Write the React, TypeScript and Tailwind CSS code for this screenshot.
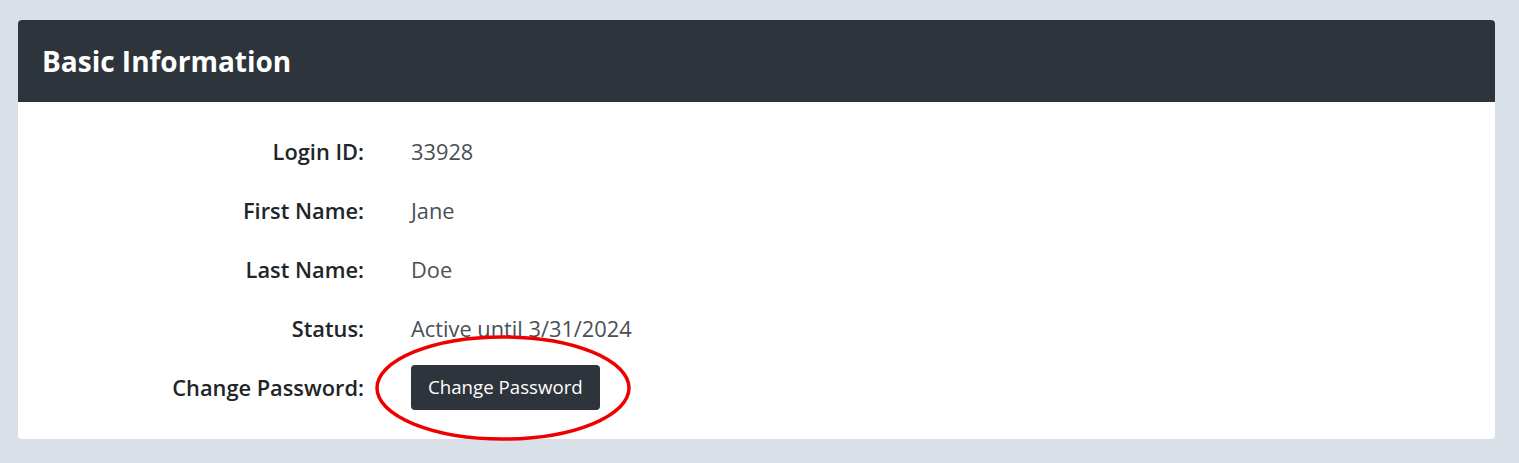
const rows: { label: string; value: string }[] = [
  { label: "Login ID:", value: "33928" },
  { label: "First Name:", value: "Jane" },
  { label: "Last Name:", value: "Doe" },
  { label: "Status:", value: "Active until 3/31/2024" },
];

export default function App() {
  return (
    <div
      className="min-h-[463px] bg-[#d9e0e8] pl-[18px] pr-[24px] pt-[20px] pb-[25px]"
      style={{ fontFamily: "'Open Sans', sans-serif" }}
    >
      <div className="relative rounded-[4px] bg-white">
        {/* Header */}
        <div className="flex h-[82px] items-center rounded-t-[4px] bg-[#2e343b] px-6">
          <h2 className="text-[28px] font-bold text-white">Basic Information</h2>
        </div>

        {/* Body */}
        <div className="pt-[21px] pb-[21px]">
          {rows.map((r) => (
            <div key={r.label} className="flex h-[59px] items-center">
              <div className="w-[346px] text-right text-[21.8px] font-semibold text-[#212529]">
                {r.label}
              </div>
              <div className="pl-[47px] text-[21.8px] text-[#4a4f55]">{r.value}</div>
            </div>
          ))}
          <div className="flex h-[59px] items-center">
            <div className="w-[346px] text-right text-[21.8px] font-semibold text-[#212529]">
              Change Password:
            </div>
            <div className="pl-[47px]">
              <button className="-mt-[3px] h-[45px] rounded-[4px] bg-[#2e343b] px-[17px] text-[18.7px] text-white">
                Change Password
              </button>
            </div>
          </div>
        </div>

        {/* Red annotation ellipse */}
        <svg
          className="pointer-events-none absolute left-[356px] top-[314px]"
          width="260"
          height="108"
          viewBox="0 0 260 108"
        >
          <ellipse cx="129" cy="54" rx="126" ry="51" fill="none" stroke="#ee0000" strokeWidth="3.5" />
        </svg>
      </div>
    </div>
  );
}
